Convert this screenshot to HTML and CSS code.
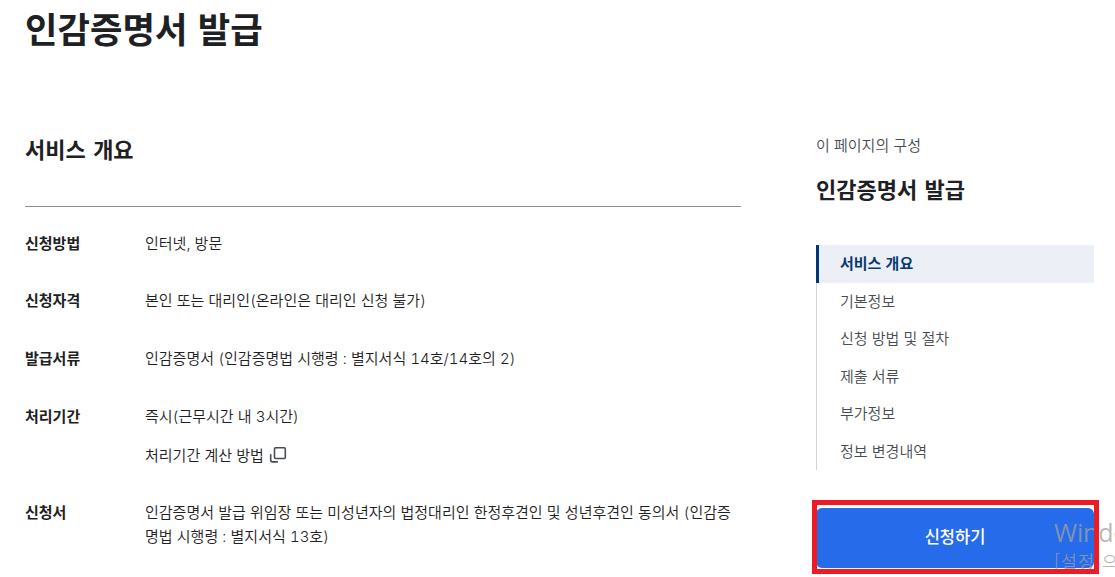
FILE: index.html
```html
<!DOCTYPE html>
<html lang="ko">
<head>
	<meta charset="UTF-8">
	<title>인감증명서 발급</title>
	<link rel="stylesheet" href="styles.css">
</head>
<body>
	<div class="page">
		<h1 class="page-title">인감증명서 발급</h1>
		<div class="container">
			<div class="content">
				<h2 class="sec-title">서비스 개요</h2>
				<dl class="info">
					<dt>신청방법</dt>
					<dd>인터넷, 방문</dd>
					<dt>신청자격</dt>
					<dd>본인 또는 대리인(온라인은 대리인 신청 불가)</dd>
					<dt>발급서류</dt>
					<dd>인감증명서 (인감증명법 시행령 : 별지서식 14호/14호의 2)</dd>
					<dt>처리기간</dt>
					<dd>
						<p>즉시(근무시간 내 3시간)</p>
						<a href="#" class="link-pop">처리기간 계산 방법
							<svg class="ico" width="18" height="18" viewBox="0 0 18 18" fill="none" stroke="#464c53" stroke-width="1.6" stroke-linecap="round" stroke-linejoin="round">
								<rect x="5.5" y="1.7" width="10.8" height="10.8" rx="1.2"/>
								<path d="M1.7 8.7v5.6a1.6 1.6 0 0 0 1.6 1.6h5"/>
							</svg>
						</a>
					</dd>
					<dt>신청서</dt>
					<dd>인감증명서 발급 위임장 또는 미성년자의 법정대리인 한정후견인 및 성년후견인 동의서 (인감증명법 시행령 : 별지서식 13호)</dd>
				</dl>
			</div>
			<div class="side">
				<p class="side-caption">이 페이지의 구성</p>
				<h2 class="side-title">인감증명서 발급</h2>
				<ul class="side-nav">
					<li class="active"><a href="#">서비스 개요</a></li>
					<li><a href="#">기본정보</a></li>
					<li><a href="#">신청 방법 및 절차</a></li>
					<li><a href="#">제출 서류</a></li>
					<li><a href="#">부가정보</a></li>
					<li><a href="#">정보 변경내역</a></li>
				</ul>
				<div class="apply">
					<button type="button" class="btn">신청하기</button>
					<span class="mark"></span>
				</div>
			</div>
		</div>
	</div>
	<div class="watermark">
		<p class="wm-title">Windows</p>
		<p class="wm-text">[설정]으로</p>
	</div>
</body>
</html>
```

FILE: styles.css
```css
*{box-sizing:border-box;}
html,body{height:100%;overflow:hidden;}
body{position:relative;margin:0;background:#fff;color:#1e2124;font:15px/24px Inter,"Noto Sans CJK KR",sans-serif;font-variant-numeric:tabular-nums;word-spacing:.15px;word-break:break-all;}
h1,h2,p,dl,dd,ul{margin:0;padding:0;}
ul{list-style:none;}
a{color:inherit;text-decoration:none;}

.page{padding:0 21px 0 25px;}
.page-title{height:130px;padding-top:7px;font-size:35.3px;line-height:48px;font-weight:700;word-spacing:1px;}
.container{display:flex;justify-content:space-between;}

/* 본문 */
.content{width:716px;}
.sec-title{height:77px;padding-top:5px;font-size:22px;line-height:30px;font-weight:700;word-spacing:1.5px;border-bottom:1px solid #8a8d91;}
.info{display:grid;grid-template-columns:120px 1fr;row-gap:33.6px;padding-top:24.8px;font-weight:350;}
.info dt{font-weight:700;}
.link-pop{display:flex;align-items:center;gap:5px;margin-top:15px;}
.ico{flex:none;margin-top:-1px;}

/* 오른쪽 메뉴 */
.side{width:278px;}
.side-caption{padding-top:4px;color:#464c53;font-weight:350;}
.side-title{padding:17px 0 40px;font-size:22px;line-height:30px;font-weight:700;word-spacing:1.5px;}
.side-nav{font-weight:350;color:#464c53;}
.side-nav li{height:37.5px;line-height:38px;padding-left:23px;border-left:1px solid #cdd6e3;}
.side-nav .active{padding-left:21px;border-left:3px solid #003675;background:#eceff5;color:#063a74;font-weight:700;}
.apply{position:relative;margin-top:38px;}
.btn{display:block;width:100%;height:60px;padding:0 0 4px;border:0;border-radius:6px;background:#256bea;color:#fff;font:500 16.5px/56px "Noto Sans CJK KR",sans-serif;}
.mark{position:absolute;z-index:2;left:-4px;top:-8px;width:287px;height:74px;border:5px solid #ed1c24;}

/* 화면 오른쪽 아래 안내 */
.watermark{position:absolute;z-index:1;left:1054px;top:516px;width:61px;height:53px;overflow:hidden;color:rgba(160,160,160,.75);white-space:nowrap;}
.wm-title{font:25px/32px "Open Sans",sans-serif;letter-spacing:-.2px;}
.wm-text{font:350 17.5px/26px "Noto Sans CJK KR",sans-serif;letter-spacing:1px;}
```
